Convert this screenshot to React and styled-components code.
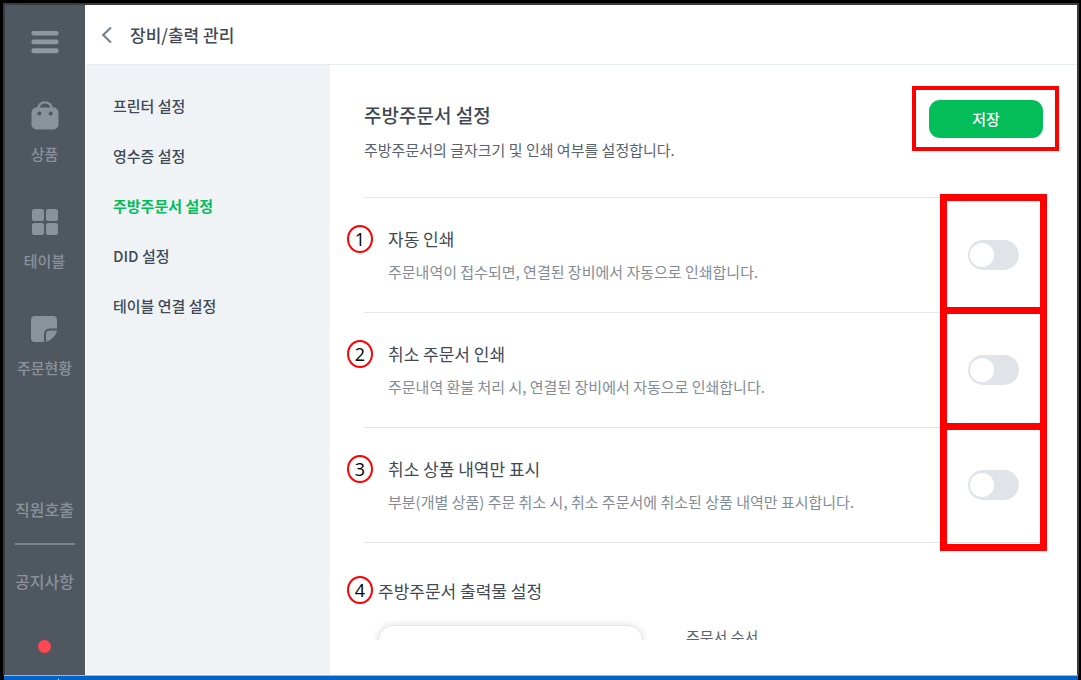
import React, { useState } from "react";
import styled, { createGlobalStyle } from "styled-components";

const GlobalStyle = createGlobalStyle`
    * {
        box-sizing: border-box;
    }

    body {
        margin: 0;
        background: #000;
        font-family: "Noto Sans CJK KR", "Noto Sans", sans-serif;
    }

    h1, h2, h3, p, ul {
        margin: 0;
        padding: 0;
    }

    button {
        border: 0;
        padding: 0;
        background: none;
        font-family: inherit;
        cursor: pointer;
    }
`;

const Screen = styled.div`
    display: flex;
    flex-direction: column;
    height: 100vh;
    padding: 3px 2px 0 3px;
    background: #000;
`;

const Body = styled.div`
    display: flex;
    flex: 1;
    min-height: 0;
    border: 2px solid #3b3b3d;
    border-bottom: 0;
`;

const BottomBar = styled.div`
    flex-shrink: 0;
    display: flex;
    align-items: flex-end;
    height: 5px;
    margin: 0 1px;
    padding-left: 54px;
    border-top: 1px solid #8fb8e6;
    background: #0562c8;
`;

const Tick = styled.span`
    width: 1px;
    height: 1px;
    background: #fff;
`;

const Sidebar = styled.nav`
    display: flex;
    flex-direction: column;
    align-items: center;
    flex-shrink: 0;
    width: 80px;
    padding: 25px 1px 22px 0;
    background: #4f5760;
`;

const MenuButton = styled.button`
    display: flex;
    height: 24px;
    margin-bottom: 46px;
`;

const SideItem = styled.a`
    display: flex;
    flex-direction: column;
    align-items: center;
    gap: 13px;
    margin-bottom: 42px;
    color: #8a929b;
    font-size: 15px;
    font-weight: 500;
    line-height: 22px;
    text-decoration: none;

    svg {
        display: block;
    }
`;

const SideBottom = styled.div`
    display: flex;
    flex-direction: column;
    align-items: center;
    margin-top: auto;
`;

const SideText = styled.button`
    color: #8a929b;
    font-size: 16px;
    font-weight: 500;
    line-height: 24px;
`;

const SideLine = styled.hr`
    width: 60px;
    height: 2px;
    margin: 22px 0 24px;
    border: 0;
    background: #7b858e;
`;

const RedDot = styled.span`
    width: 13px;
    height: 13px;
    margin-top: 47px;
    border-radius: 50%;
    background: #ff4853;
`;

const Page = styled.div`
    display: flex;
    flex-direction: column;
    flex: 1;
    min-width: 0;
    padding: 1px 0 1px 1px;
    background: #fff;
`;

const Header = styled.header`
    display: flex;
    align-items: center;
    flex-shrink: 0;
    gap: 17px;
    height: 59px;
    padding-left: 15px;
    border-bottom: 1px solid #e6ecef;
`;

const BackButton = styled.button`
    display: flex;
`;

const HeaderTitle = styled.h1`
    color: #414a54;
    font-size: 17px;
    font-weight: 500;
    line-height: 24px;
`;

const Columns = styled.div`
    display: flex;
    flex: 1;
    min-height: 0;
`;

const SubMenu = styled.ul`
    flex-shrink: 0;
    width: 244px;
    padding: 16px 27px;
    background: #eff3f6;
    list-style: none;
`;

const SubMenuLink = styled.a`
    display: block;
    color: ${(props) => (props.$active ? "#03bd59" : "#414a54")};
    font-size: 15px;
    font-weight: ${(props) => (props.$active ? 700 : 500)};
    line-height: 50px;
    text-decoration: none;
`;

const Main = styled.main`
    flex: 1;
    min-width: 0;
    padding: 0 18px 34px 17px;
`;

const Scroll = styled.div`
    height: 100%;
    padding: 21px 0 0 17px;
    overflow: hidden;
`;

const Intro = styled.div`
    display: flex;
    justify-content: space-between;
    height: 111px;
`;

const IntroTitle = styled.h2`
    margin-top: 15px;
    color: #414a54;
    font-size: 19px;
    font-weight: 500;
    line-height: 28px;
`;

const IntroText = styled.p`
    margin-top: 9px;
    color: #59626c;
    font-size: 15px;
    line-height: 24px;
`;

const SaveFrame = styled.div`
    align-self: flex-start;
    flex-shrink: 0;
    padding: 10px 12px 9px 13px;
    border: 4px solid #f00;
`;

const SaveButton = styled.button`
    display: block;
    width: 114px;
    height: 38px;
    border-radius: 11px;
    background: #03bd59;
    color: #fff;
    font-size: 15px;
    font-weight: 500;
    line-height: 24px;
`;

const Settings = styled.section`
    position: relative;
    margin-right: 16px;
    border-top: 1px solid #e4e7ea;
`;

const Row = styled.div`
    position: relative;
    display: flex;
    align-items: center;
    justify-content: space-between;
    height: 115px;
    padding: 0 24px;
    border-bottom: 1px solid #e4e7ea;
`;

const RowTitle = styled.label`
    display: block;
    color: #414a54;
    font-size: 17px;
    line-height: 24px;
`;

const RowText = styled.p`
    margin-top: 9px;
    color: #838c96;
    font-size: 15px;
    line-height: 24px;
`;

const Badge = styled.span`
    position: absolute;
    top: ${(props) => props.$top || "27px"};
    left: -17px;
    width: 26px;
    height: 28px;
    border: 2px solid #f00;
    border-radius: 50%;
    color: #000;
    font-family: "Open Sans", "Noto Sans", sans-serif;
    font-size: 18px;
    line-height: 24px;
    text-align: center;
`;

const Toggle = styled.input`
    appearance: none;
    display: flex;
    flex-shrink: 0;
    width: 51px;
    height: 30px;
    margin: 0;
    padding: 3px 2px;
    border-radius: 15px;
    background: ${(props) => (props.checked ? "#03bd59" : "#e0e4e9")};
    cursor: pointer;

    &::before {
        content: "";
        width: 24px;
        height: 24px;
        margin-left: ${(props) => (props.checked ? "23px" : "0")};
        border-radius: 50%;
        background: #fff;
    }
`;

// red outline laid over the toggle column
const ToggleMarks = styled.div`
    position: absolute;
    top: -4px;
    right: -4px;
    bottom: -8px;
    display: grid;
    grid-template-rows: 113px 116px 1fr;
    width: 107px;
    border: 7px solid #f00;
    border-top: 0;
    pointer-events: none;
`;

const Mark = styled.span`
    border-top: 7px solid #f00;
`;

const PrintSection = styled.section`
    position: relative;
    padding: 36px 0 0 14px;
`;

const PrintTitle = styled.h3`
    color: #414a54;
    font-size: 17px;
    font-weight: 400;
    line-height: 24px;
`;

const PrintBody = styled.div`
    display: flex;
    gap: 43px;
    margin-top: 22px;
`;

const Preview = styled.div`
    width: 265px;
    height: 240px;
    border: 1px solid #e4e7ea;
    border-radius: 15px;
    background: #fff;
    box-shadow: 0 0 8px rgba(0, 0, 0, 0.12);
`;

const PrintLabel = styled.p`
    color: #59626c;
    font-size: 15px;
    line-height: 24px;
`;

const sideItems = [
    { id: 1, name: "상품", icon: <BagIcon /> },
    { id: 2, name: "테이블", icon: <TableIcon /> },
    { id: 3, name: "주문현황", icon: <OrderIcon /> },
];

const subMenus = ["프린터 설정", "영수증 설정", "주방주문서 설정", "DID 설정", "테이블 연결 설정"];

const settings = [
    { id: 1, title: "자동 인쇄", text: "주문내역이 접수되면, 연결된 장비에서 자동으로 인쇄합니다." },
    { id: 2, title: "취소 주문서 인쇄", text: "주문내역 환불 처리 시, 연결된 장비에서 자동으로 인쇄합니다." },
    { id: 3, title: "취소 상품 내역만 표시", text: "부분(개별 상품) 주문 취소 시, 취소 주문서에 취소된 상품 내역만 표시합니다." },
];

function MenuIcon() {
    return (
        <svg width="28" height="24" viewBox="0 0 28 24" fill="#8f979f">
            <rect x="0.5" y="1" width="27" height="4.6" rx="1.8" />
            <rect x="0.5" y="9.6" width="27" height="4.6" rx="1.8" />
            <rect x="0.5" y="18.2" width="27" height="5" rx="1.8" />
        </svg>
    );
}

function BagIcon() {
    return (
        <svg width="28" height="30" viewBox="0 0 28 30">
            <path d="M7.4 9.4V8.6a6.6 6.2 0 0 1 13.2 0V9.4" fill="none" stroke="#8a939b" strokeWidth="2.4" />
            <rect x="0.5" y="7.5" width="27" height="22" rx="5" fill="#8a939b" />
            <circle cx="8.3" cy="13.5" r="2" fill="#4f5760" />
            <circle cx="19.7" cy="13.5" r="2" fill="#4f5760" />
        </svg>
    );
}

function TableIcon() {
    return (
        <svg width="28" height="30" viewBox="0 0 28 30" fill="#8a939b">
            <rect x="1" y="2" width="12" height="12" rx="2.6" />
            <rect x="15" y="2" width="12" height="12" rx="2.6" />
            <rect x="1" y="16" width="12" height="12" rx="2.6" />
            <rect x="15" y="16" width="12" height="12" rx="2.6" />
        </svg>
    );
}

function OrderIcon() {
    return (
        <svg width="28" height="30" viewBox="0 0 28 30" fill="#8a939b">
            <path d="M5 2h18a4 4 0 0 1 4 4v8.6h-7.5a5.5 5.5 0 0 0-5.5 5.5V28H5a4 4 0 0 1-4-4V6a4 4 0 0 1 4-4z" />
            <path d="M16 27.8v-7.3a4 4 0 0 1 4-4h7c-.4 4.4-6.4 10.6-11 11.3z" />
        </svg>
    );
}

function BackIcon() {
    return (
        <svg width="12" height="18" viewBox="0 0 12 18" fill="none" stroke="#78828c" strokeWidth="2.2">
            <path d="M10 1.5L2.2 9l7.8 7.5" />
        </svg>
    );
}

export default function App() {
    const [checked, setChecked] = useState({});

    function handleToggle(id) {
        setChecked({ ...checked, [id]: !checked[id] });
    }

    return (
        <Screen>
            <GlobalStyle />
            <Body>
                <Sidebar>
                    <MenuButton aria-label="메뉴"><MenuIcon /></MenuButton>
                    {sideItems.map((item) => (
                        <SideItem key={item.id} href="#">
                            {item.icon}
                            {item.name}
                        </SideItem>
                    ))}
                    <SideBottom>
                        <SideText>직원호출</SideText>
                        <SideLine />
                        <SideText>공지사항</SideText>
                        <RedDot />
                    </SideBottom>
                </Sidebar>
                <Page>
                    <Header>
                        <BackButton aria-label="뒤로"><BackIcon /></BackButton>
                        <HeaderTitle>장비/출력 관리</HeaderTitle>
                    </Header>
                    <Columns>
                        <SubMenu>
                            {subMenus.map((name) => (
                                <li key={name}>
                                    <SubMenuLink href="#" $active={name === "주방주문서 설정"}>{name}</SubMenuLink>
                                </li>
                            ))}
                        </SubMenu>
                        <Main>
                            <Scroll>
                                <Intro>
                                    <div>
                                        <IntroTitle>주방주문서 설정</IntroTitle>
                                        <IntroText>주방주문서의 글자크기 및 인쇄 여부를 설정합니다.</IntroText>
                                    </div>
                                    <SaveFrame>
                                        <SaveButton>저장</SaveButton>
                                    </SaveFrame>
                                </Intro>
                                <Settings>
                                    {settings.map((item) => (
                                        <Row key={item.id}>
                                            <Badge>{item.id}</Badge>
                                            <div>
                                                <RowTitle htmlFor={`setting${item.id}`}>{item.title}</RowTitle>
                                                <RowText>{item.text}</RowText>
                                            </div>
                                            <Toggle
                                                id={`setting${item.id}`}
                                                type="checkbox"
                                                role="switch"
                                                checked={!!checked[item.id]}
                                                onChange={() => handleToggle(item.id)}
                                            />
                                        </Row>
                                    ))}
                                    <ToggleMarks>
                                        <Mark />
                                        <Mark />
                                        <Mark />
                                    </ToggleMarks>
                                </Settings>
                                <PrintSection>
                                    <Badge $top="33px">4</Badge>
                                    <PrintTitle>주방주문서 출력물 설정</PrintTitle>
                                    <PrintBody>
                                        <Preview />
                                        <PrintLabel>주문서 순서</PrintLabel>
                                    </PrintBody>
                                </PrintSection>
                            </Scroll>
                        </Main>
                    </Columns>
                </Page>
            </Body>
            <BottomBar><Tick /></BottomBar>
        </Screen>
    );
}
